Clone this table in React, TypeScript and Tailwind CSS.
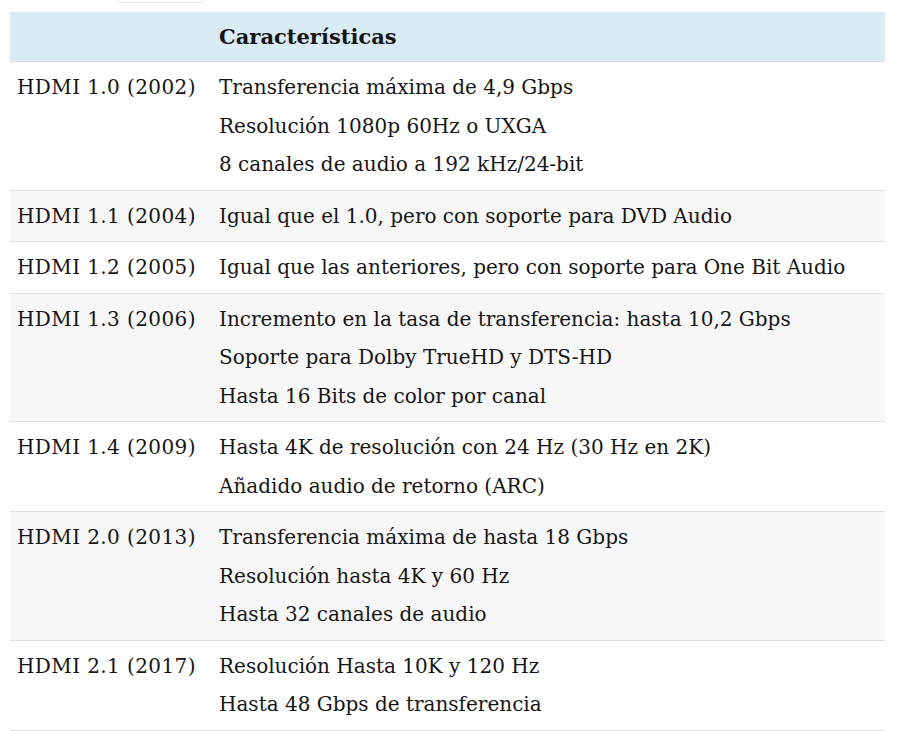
const rows: { version: string; lines: string[] }[] = [
  {
    version: "HDMI 1.0 (2002)",
    lines: [
      "Transferencia máxima de 4,9 Gbps",
      "Resolución 1080p 60Hz o UXGA",
      "8 canales de audio a 192 kHz/24-bit",
    ],
  },
  {
    version: "HDMI 1.1 (2004)",
    lines: ["Igual que el 1.0, pero con soporte para DVD Audio"],
  },
  {
    version: "HDMI 1.2 (2005)",
    lines: ["Igual que las anteriores, pero con soporte para One Bit Audio"],
  },
  {
    version: "HDMI 1.3 (2006)",
    lines: [
      "Incremento en la tasa de transferencia: hasta 10,2 Gbps",
      "Soporte para Dolby TrueHD y DTS-HD",
      "Hasta 16 Bits de color por canal",
    ],
  },
  {
    version: "HDMI 1.4 (2009)",
    lines: [
      "Hasta 4K de resolución con 24 Hz (30 Hz en 2K)",
      "Añadido audio de retorno (ARC)",
    ],
  },
  {
    version: "HDMI 2.0 (2013)",
    lines: [
      "Transferencia máxima de hasta 18 Gbps",
      "Resolución hasta 4K y 60 Hz",
      "Hasta 32 canales de audio",
    ],
  },
  {
    version: "HDMI 2.1 (2017)",
    lines: ["Resolución Hasta 10K y 120 Hz", "Hasta 48 Gbps de transferencia"],
  },
];

const App = () => {
  return (
    <div className="relative h-[731px] w-[900px] overflow-hidden bg-white text-[#151515] font-['DejaVu_Serif',serif] text-[20px]">
      <div className="absolute left-[117px] top-[-10px] h-[13px] w-[89px] rounded-b-[5px] border border-[#e2e2e2]" />
      <div className="pl-[10px] pt-[12px] w-[885px]">
        <div className="flex h-[50px] items-center border-b border-[#dcdcdc] bg-[#d9ebf5]">
          <div className="w-[202px]" />
          <div className="pl-[7px] text-[21px] font-bold">Características</div>
        </div>
        {rows.map((row, i) => (
          <div
            key={row.version}
            className={`flex border-b border-[#dddddd] py-[6px] leading-[38.5px] ${
              i % 2 === 1 ? "bg-[#f7f7f7]" : "bg-white"
            }`}
          >
            <div className="w-[202px] shrink-0 pl-[7px] tracking-[0.4px]">{row.version}</div>
            <div className="pl-[7px]">
              {row.lines.map((line) => (
                <div key={line}>{line}</div>
              ))}
            </div>
          </div>
        ))}
      </div>
    </div>
  );
};

export default App;
